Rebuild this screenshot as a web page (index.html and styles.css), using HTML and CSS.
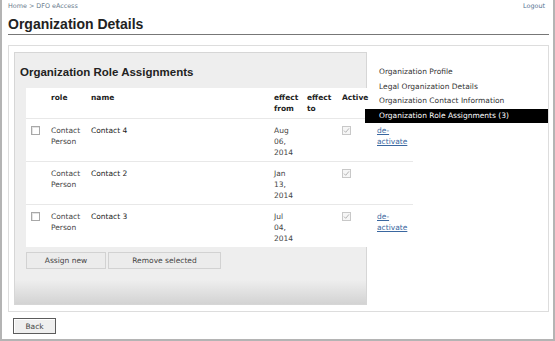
FILE: index.html
```html
<!DOCTYPE html>
<html lang="en">
<head>
    <meta charset="UTF-8">
    <title>Organization Details</title>
    <link rel="stylesheet" href="styles.css">
</head>
<body>
<div class="page">
    <div class="topbar">
        <span class="crumbs">Home <span class="sep">&gt;</span> DFO eAccess</span>
        <a class="logout" href="#">Logout</a>
    </div>
    <h1>Organization Details</h1>

    <div class="content">
        <div class="panel">
            <h2>Organization Role Assignments</h2>
            <table class="roles">
                <colgroup>
                    <col style="width:25px"><col style="width:40px"><col style="width:183px">
                    <col style="width:33px"><col style="width:34px"><col style="width:36px"><col style="width:36px">
                </colgroup>
                <thead>
                    <tr>
                        <th></th>
                        <th>role</th>
                        <th>name</th>
                        <th>effect from</th>
                        <th>effect to</th>
                        <th class="active-col">Active</th>
                        <th></th>
                    </tr>
                </thead>
                <tbody>
                    <tr>
                        <td class="select"><span class="box"></span></td>
                        <td>Contact Person</td>
                        <td class="name">Contact 4</td>
                        <td><span class="date">Aug 06, 2014</span></td>
                        <td></td>
                        <td class="active-col"><span class="box checked"><svg width="7" height="7" viewBox="0 0 7 7"><path d="M1 3.6 L2.7 5.3 L6 1.4" fill="none" stroke="#b5b5b5" stroke-width="1"/></svg></span></td>
                        <td><a href="#">de-activate</a></td>
                    </tr>
                    <tr>
                        <td class="select"></td>
                        <td>Contact Person</td>
                        <td class="name">Contact 2</td>
                        <td><span class="date">Jan 13, 2014</span></td>
                        <td></td>
                        <td class="active-col"><span class="box checked"><svg width="7" height="7" viewBox="0 0 7 7"><path d="M1 3.6 L2.7 5.3 L6 1.4" fill="none" stroke="#b5b5b5" stroke-width="1"/></svg></span></td>
                        <td></td>
                    </tr>
                    <tr>
                        <td class="select"><span class="box"></span></td>
                        <td>Contact Person</td>
                        <td class="name">Contact 3</td>
                        <td><span class="date">Jul 04, 2014</span></td>
                        <td></td>
                        <td class="active-col"><span class="box checked"><svg width="7" height="7" viewBox="0 0 7 7"><path d="M1 3.6 L2.7 5.3 L6 1.4" fill="none" stroke="#b5b5b5" stroke-width="1"/></svg></span></td>
                        <td><a href="#">de-activate</a></td>
                    </tr>
                </tbody>
            </table>
            <div class="actions">
                <button class="btn assign">Assign new</button>
                <button class="btn remove">Remove selected</button>
            </div>
        </div>

        <ul class="side-nav">
            <li><a href="#">Organization Profile</a></li>
            <li><a href="#">Legal Organization Details</a></li>
            <li><a href="#">Organization Contact Information</a></li>
            <li class="current"><a href="#">Organization Role Assignments (3)</a></li>
        </ul>
    </div>

    <button class="back">Back</button>
</div>
</body>
</html>
```

FILE: styles.css
```css
body {
    margin: 0;
    font-family: "DejaVu Sans", Verdana, sans-serif;
    font-size: 7.5px;
    color: #444;
    background: #fff;
}
.page {
    box-sizing: border-box;
    width: 555px;
    height: 341px;
    border: 2px solid #b4b4b4;
    border-top: 0;
    padding: 0 4px 0 6px;
}
.topbar {
    display: flex;
    justify-content: space-between;
    padding-top: 2px;
    font-size: 6.4px;
    line-height: 9px;
    color: #687a8c;
}
.logout {
    color: #54718f;
    text-decoration: none;
    margin-right: 4px;
}
h1 {
    margin: 5px 0 0;
    padding-bottom: 1px;
    font: bold 14px/17px "Liberation Sans", Arial, sans-serif;
    color: #222;
    border-bottom: 1px solid #777;
}
.content {
    display: flex;
    margin-top: 10px;
    border: 1px solid #ddd;
    padding: 6px 0 6px 5px;
}
.panel {
    flex: none;
    width: 353px;
    box-sizing: border-box;
    border: 1px solid #d6d6d6;
    background: linear-gradient(to bottom, #eeeeee calc(100% - 24px), #d3d3d3);
    padding: 12px 0 35px 5px;
}
h2 {
    margin: 0;
    font: bold 11.5px/14px "Liberation Sans", Arial, sans-serif;
    color: #222;
}
.roles {
    margin: 9px 0 0 6px;
    width: 387px;
    table-layout: fixed;
    border-collapse: separate;
    border-spacing: 0;
    background: #fff;
}
.roles th,
.roles td {
    text-align: left;
    vertical-align: top;
    line-height: 11px;
}
.roles th {
    padding: 4px 6px 4px 0;
    font-weight: bold;
    color: #222;
}
.roles td {
    padding: 6px 6px 3px 0;
    border-top: 1px solid #e8e8e8;
    height: 33px;
}
.roles td.name {
    color: #222;
}
.roles td.select {
    padding-left: 5px;
}
.roles .active-col {
    padding-left: 1px;
}
.roles a {
    color: #3a67a0;
}
.date {
    display: block;
    width: min-content;
}
.box {
    display: block;
    box-sizing: border-box;
    width: 9px;
    height: 9px;
    margin-top: 1px;
    border: 1px solid #a8a8a8;
    background: #fff;
    box-shadow: inset 1px 1px 0 #e4e4e4;
}
.box.checked {
    border-color: #c8c8c8;
    background: #f6f6f6;
    box-shadow: none;
}
.box svg {
    display: block;
}
.actions {
    display: flex;
    gap: 2px;
    margin: 5px 0 0 6px;
}
.btn {
    height: 17px;
    padding: 0;
    border: 1px solid #d2d2d2;
    background: #ececec;
    font-family: "DejaVu Sans", Verdana, sans-serif;
    font-size: 7.5px;
    color: #444;
}
.btn.assign {
    width: 80px;
}
.btn.remove {
    width: 113px;
}
.side-nav {
    position: relative;
    flex: 1;
    list-style: none;
    margin: 13px 0 0 -2px;
    padding: 0;
}
.side-nav a {
    display: block;
    padding-left: 14px;
    line-height: 14.5px;
    color: #333;
    text-decoration: none;
}
.side-nav .current a {
    background: #000;
    color: #fff;
}
.back {
    display: block;
    margin: 6px 0 0 5px;
    width: 43px;
    height: 16px;
    padding: 0;
    border: 1px solid #5c5c5c;
    background: #efefef;
    box-shadow: inset 1px 1px 0 #fff;
    font-family: "DejaVu Sans", Verdana, sans-serif;
    font-size: 7.5px;
    color: #444;
}
```
